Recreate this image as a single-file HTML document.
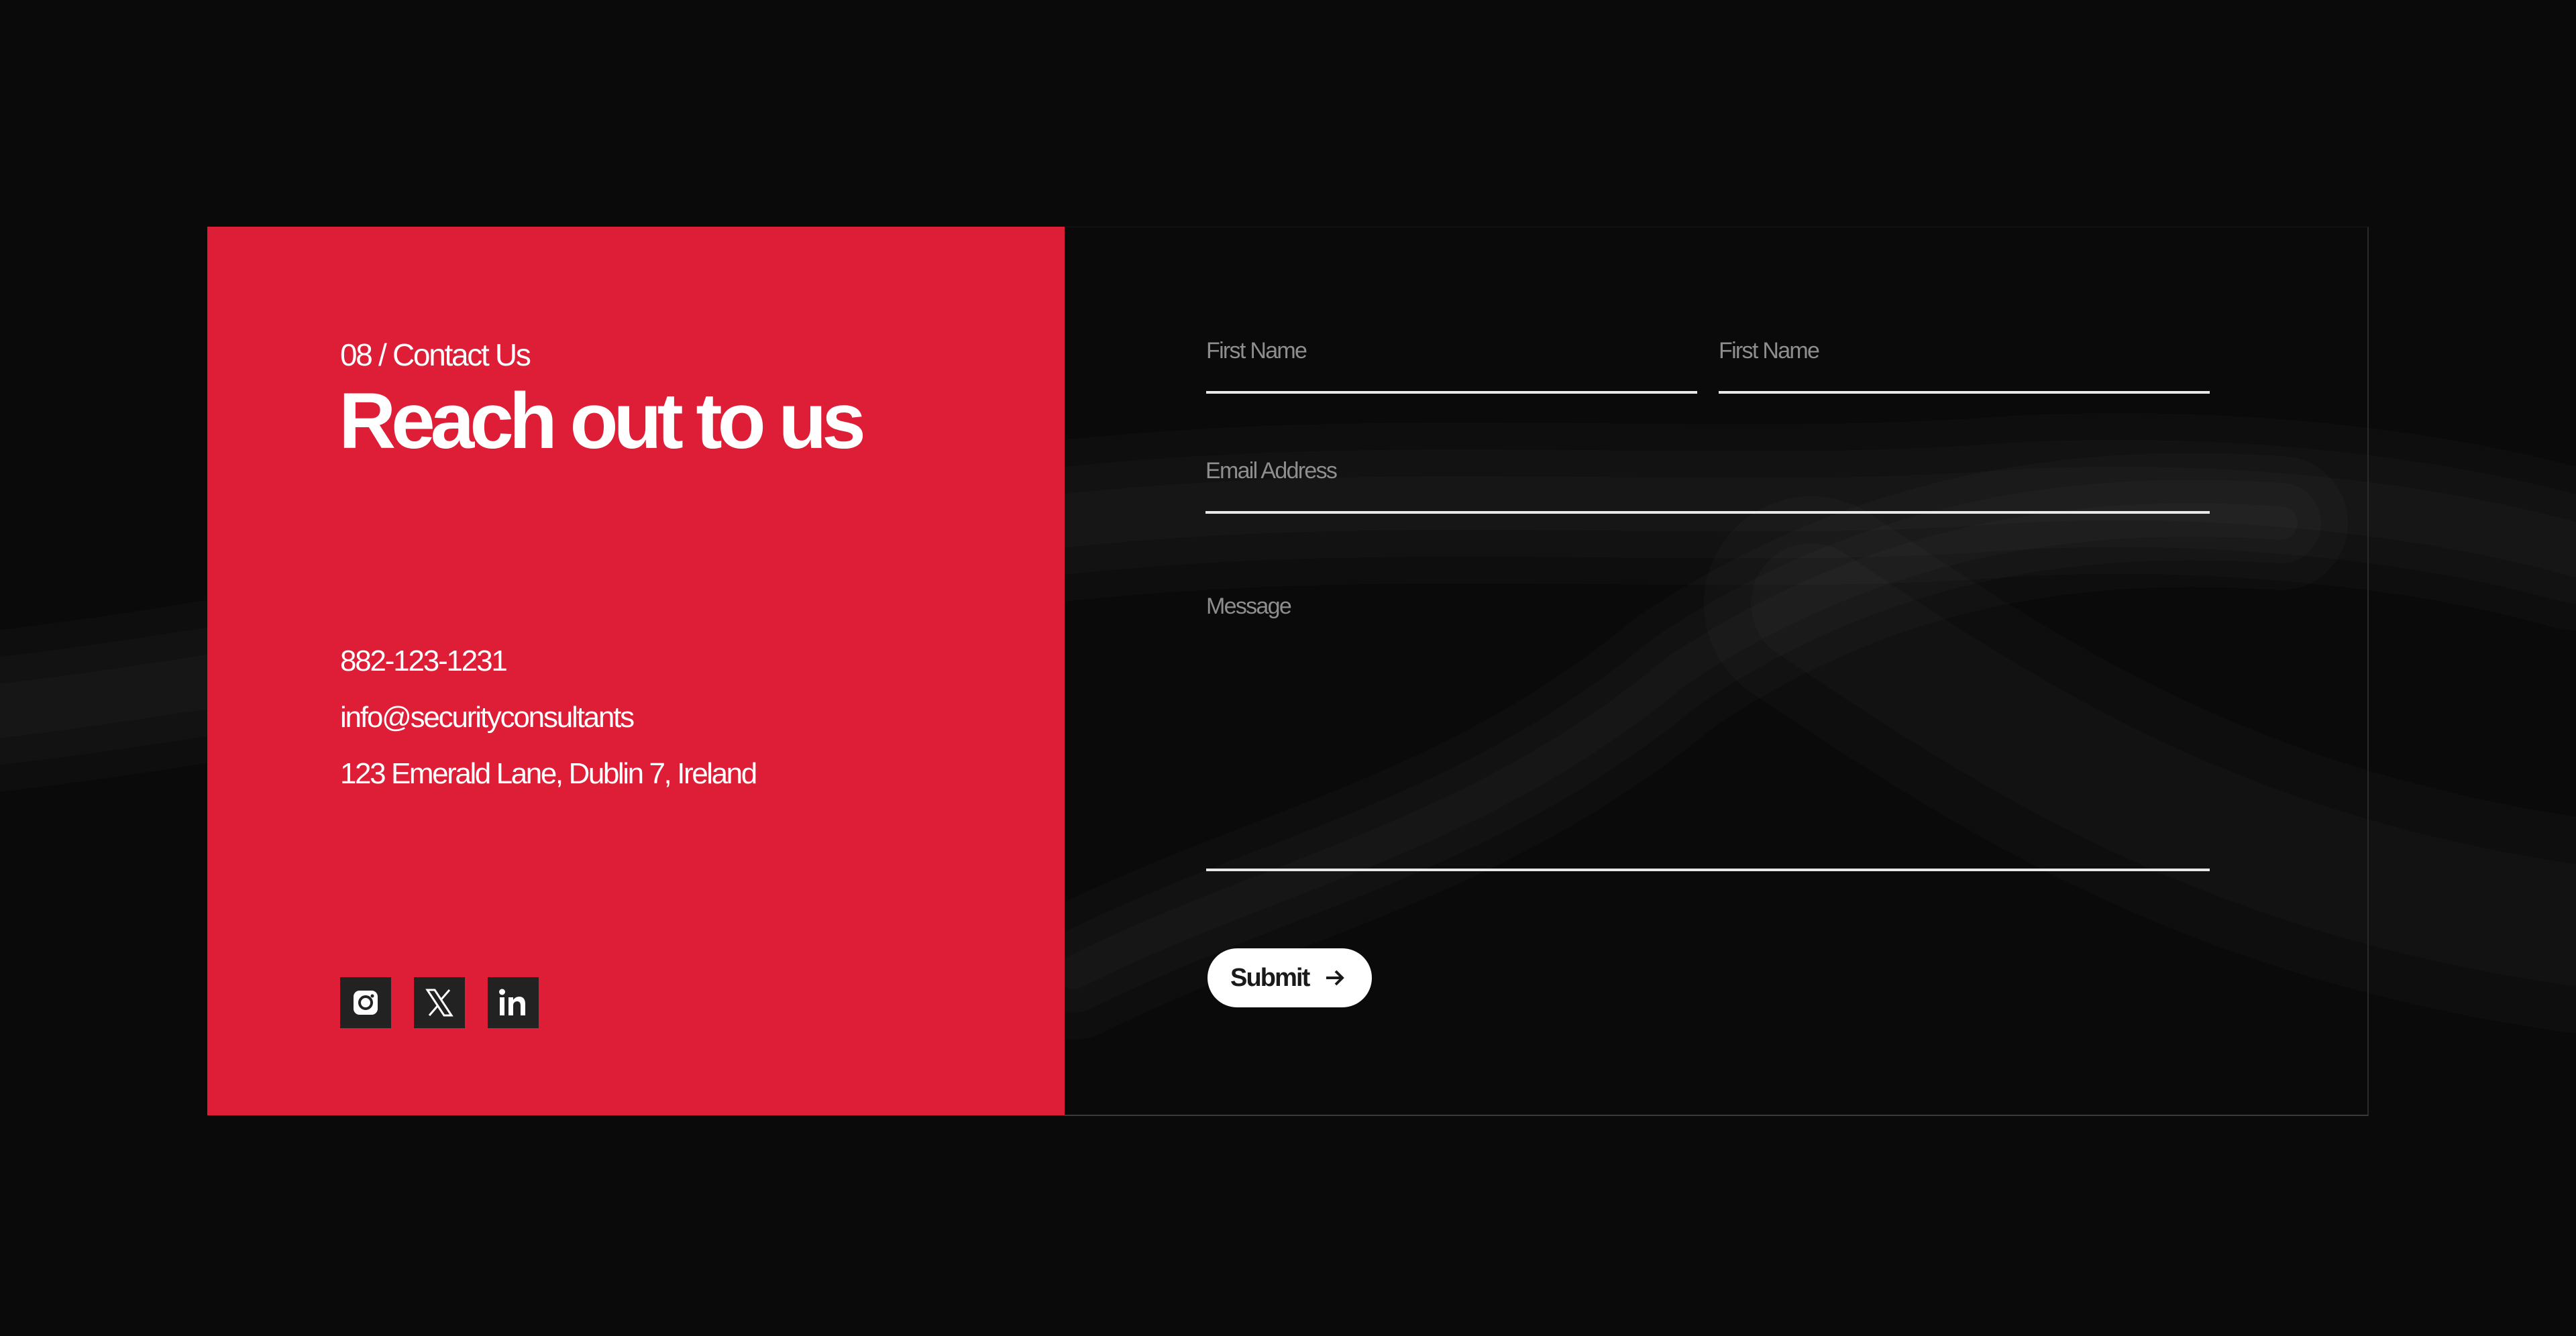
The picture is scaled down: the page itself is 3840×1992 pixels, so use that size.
<!DOCTYPE html>
<html><head><meta charset="utf-8"><style>
*{margin:0;padding:0;box-sizing:border-box}
body{width:3840px;height:1992px;background:#0a0a0a;position:relative;overflow:hidden;font-family:"Liberation Sans",sans-serif;color:#fff}
.abs{position:absolute}
.red{left:309px;top:338px;width:1278px;height:1325px;background:#dd1e36}
.panel{left:1587px;top:338px;width:1944px;height:1326px;border-right:2px solid #2a2a2a;border-bottom:2px solid #3a3a3a;border-top:1px solid #161616}
.t{letter-spacing:-0.045em;white-space:nowrap}
.lbl{font-size:34px;color:#8e8e8e;letter-spacing:-0.05em}
.line{height:4px;background:#e8e8e8}
.ic{width:76px;height:76px;background:#222;top:1457px}
</style></head><body>
<svg class="abs" style="left:0;top:0" width="3840" height="1992">
<g fill="none" stroke="#ffffff" stroke-linecap="round">
<g stroke-opacity="0.018">
<path id="p1" d="M0 1060 C500 1000 900 900 1300 820 C1900 700 2500 780 3000 740 C3400 720 3700 780 3840 820" stroke-width="240"/>
<path d="M0 1060 C500 1000 900 900 1300 820 C1900 700 2500 780 3000 740 C3400 720 3700 780 3840 820" stroke-width="160"/>
<path d="M0 1060 C500 1000 900 900 1300 820 C1900 700 2500 780 3000 740 C3400 720 3700 780 3840 820" stroke-width="80"/>
<path d="M1600 1450 C1900 1300 2200 1250 2500 1000 C2800 800 3100 760 3400 780" stroke-width="200"/>
<path d="M1600 1450 C1900 1300 2200 1250 2500 1000 C2800 800 3100 760 3400 780" stroke-width="120"/>
<path d="M1600 1450 C1900 1300 2200 1250 2500 1000 C2800 800 3100 760 3400 780" stroke-width="50"/>
<path d="M2700 900 C3000 1100 3300 1300 3840 1380" stroke-width="320"/>
<path d="M2700 900 C3000 1100 3300 1300 3840 1380" stroke-width="180"/>
</g>
</g>
</svg>
<div class="abs panel"></div>
<div class="abs red"></div>
<div class="abs t" style="left:507px;top:502px;font-size:46px;letter-spacing:-0.05em">08 / Contact Us</div>
<div class="abs t" style="left:505px;top:560px;font-size:118px;font-weight:bold;letter-spacing:-0.06em">Reach out to us</div>
<div class="abs t" style="left:507px;top:961px;font-size:44px;letter-spacing:-0.05em">882-123-1231</div>
<div class="abs t" style="left:507px;top:1045px;font-size:44px;letter-spacing:-0.05em">info@securityconsultants</div>
<div class="abs t" style="left:507px;top:1129px;font-size:44px;letter-spacing:-0.055em">123 Emerald Lane, Dublin 7, Ireland</div>
<div class="abs ic" style="left:507px"><svg width="76" height="76" viewBox="0 0 76 76"><rect x="20" y="20" width="36" height="36" rx="9" fill="#fff"/><circle cx="38" cy="38" r="9" fill="none" stroke="#222" stroke-width="4"/><circle cx="48" cy="28" r="2.5" fill="#222"/></svg></div>
<div class="abs ic" style="left:617px"><svg width="76" height="76" viewBox="0 0 76 76"><path d="M20 19h11l25 38H45z" fill="none" stroke="#fff" stroke-width="3"/><path d="M53 19L40 34M23 57l13-15" stroke="#fff" stroke-width="3"/></svg></div>
<div class="abs ic" style="left:727px"><svg width="76" height="76" viewBox="0 0 76 76"><rect x="18" y="30" width="7" height="27" fill="#fff"/><circle cx="21.5" cy="22" r="4.5" fill="#fff"/><path d="M31 30h7v4c2-3 5-5 9-5 6 0 9 4 9 11v17h-7V42c0-4-2-6-5-6s-6 2-6 6v15h-7z" fill="#fff"/></svg></div>
<div class="abs t lbl" style="left:1798px;top:504px">First Name</div>
<div class="abs t lbl" style="left:2562px;top:504px">First Name</div>
<div class="abs line" style="left:1798px;top:583px;width:732px"></div>
<div class="abs line" style="left:2562px;top:583px;width:732px"></div>
<div class="abs t lbl" style="left:1797px;top:683px">Email Address</div>
<div class="abs line" style="left:1797px;top:762px;width:1497px"></div>
<div class="abs t lbl" style="left:1798px;top:885px">Message</div>
<div class="abs line" style="left:1798px;top:1295px;width:1496px"></div>
<div class="abs" style="left:1800px;top:1414px;width:245px;height:88px;border-radius:44px;background:#fff;color:#1a1a1a;display:flex;align-items:center;padding-left:34px">
<span class="t" style="font-size:38px;font-weight:bold;letter-spacing:-0.05em">Submit</span>
<svg style="margin-left:22px" width="34" height="34" viewBox="0 0 34 34"><path d="M4 17h24M18 7l10 10-10 10" fill="none" stroke="#1a1a1a" stroke-width="4"/></svg>
</div>
</body></html>
